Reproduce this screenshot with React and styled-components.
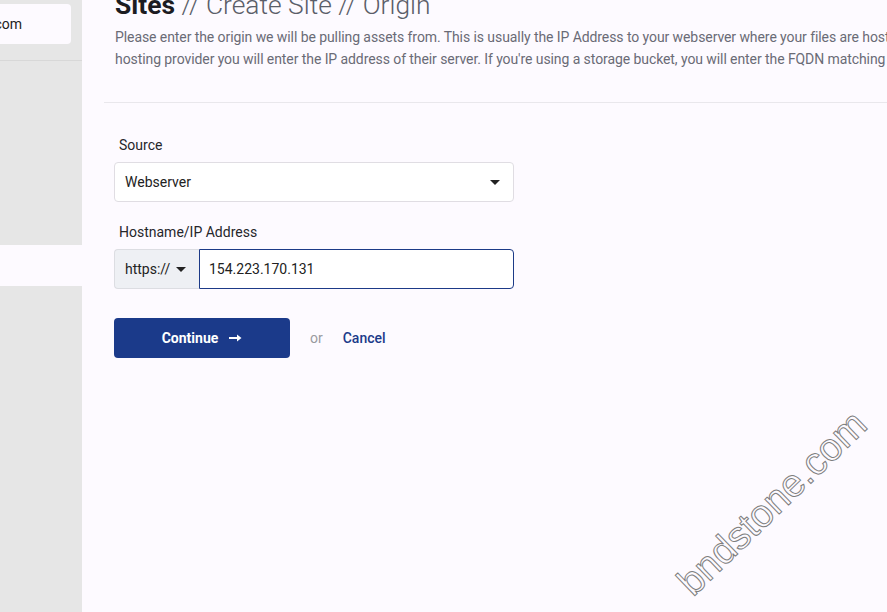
import React from 'react';
import styled, { createGlobalStyle } from 'styled-components';

const GlobalStyle = createGlobalStyle`
  html, body {
    margin: 0;
    padding: 0;
    height: 100%;
    overflow: hidden;
  }
  body {
    font-family: Roboto, 'Liberation Sans', sans-serif;
    background-color: #fdfaff;
  }
`;

const Page = styled.div`
  position: relative;
  display: flex;
  width: 887px;
  height: 612px;
  overflow: hidden;
  background-color: #fdfaff;
`;

const Sidebar = styled.div`
  flex: 0 0 82px;
  width: 82px;
  min-width: 0;
  overflow: hidden;
  display: flex;
  flex-direction: column;
  background-color: #e6e6e6;
`;

const SiteSwitch = styled.div`
  display: flex;
  align-items: center;
  justify-content: flex-end;
  margin: 4px 11px 0 0;
  height: 40px;
  padding-right: 49px;
  overflow: hidden;
  white-space: nowrap;
  background-color: #fdfaff;
  border-radius: 0 4px 4px 0;
  font-size: 14px;
  color: #222;
`;

const SiteName = styled.span`
  flex-shrink: 0;
`;

const SideRule = styled.div`
  margin-top: 16px;
  height: 1px;
  background-color: #d8d8d8;
`;

const SideItem = styled.div`
  height: 41px;
  margin-top: ${(p) => p.$offset}px;
  background-color: ${(p) => (p.$active ? '#fdfaff' : 'transparent')};
`;

const Main = styled.div`
  flex: 1;
  min-width: 0;
  padding-left: 22px;
  overflow: hidden;
`;

const Header = styled.div`
  padding: 0 0 32px 11px;
  border-bottom: 1px solid #e9e7ec;
`;

const Title = styled.h1`
  margin: -10px 0 0;
  font-size: 26.4px;
  line-height: 31px;
  font-weight: 300;
  color: #5b5e69;
  white-space: nowrap;
  b {
    font-weight: 700;
    color: #1c1c22;
  }
`;

const Lead = styled.p`
  margin: 5px 0 0;
  font-size: 14px;
  line-height: 22px;
  letter-spacing: -0.08px;
  color: #6a6b76;
  white-space: nowrap;
`;

const Form = styled.form`
  display: flex;
  flex-direction: column;
  padding: 32px 0 0 10px;
  width: 400px;
`;

const Field = styled.div`
  display: flex;
  flex-direction: column;
  margin-bottom: 20px;
`;

const Label = styled.label`
  padding-left: 5px;
  margin-bottom: 7px;
  font-size: 14px;
  line-height: 20px;
  color: #26262b;
`;

const Select = styled.div`
  display: flex;
  align-items: center;
  justify-content: space-between;
  height: 40px;
  box-sizing: border-box;
  padding: 0 13px 0 10px;
  background-color: #fff;
  border: 1px solid #e0dde3;
  border-radius: 4px;
  font-size: 14px;
  color: #222;
`;

const Caret = styled.span`
  width: 0;
  height: 0;
  border-left: 5px solid transparent;
  border-right: 5px solid transparent;
  border-top: 5px solid #222;
  margin-left: ${(p) => p.$gap || 0}px;
`;

const Group = styled.div`
  display: flex;
  height: 40px;
`;

const Addon = styled.div`
  display: flex;
  align-items: center;
  box-sizing: border-box;
  width: 85px;
  padding-left: 10px;
  background-color: #eef0f4;
  border: 1px solid #dcdde2;
  border-right: none;
  border-radius: 4px 0 0 4px;
  font-size: 14px;
  color: #222;
`;

const Input = styled.div`
  flex: 1;
  display: flex;
  align-items: center;
  box-sizing: border-box;
  padding-left: 9px;
  background-color: #fff;
  border: 1px solid #1c3a87;
  border-radius: 0 4px 4px 0;
  font-size: 14px;
  color: #222;
`;

const Actions = styled.div`
  display: flex;
  align-items: center;
  margin-top: 9px;
`;

const Primary = styled.button`
  display: flex;
  align-items: center;
  justify-content: center;
  gap: 11px;
  width: 176px;
  height: 40px;
  padding: 0;
  border: none;
  border-radius: 4px;
  background-color: #1b3a8a;
  color: #fff;
  font-family: Roboto, 'Liberation Sans', sans-serif;
  font-size: 14px;
  font-weight: 700;
`;

const Or = styled.span`
  margin-left: 20px;
  font-size: 14px;
  color: #9a9a9f;
`;

const LinkButton = styled.span`
  margin-left: 20px;
  font-size: 14px;
  font-weight: 500;
  color: #1b3a8a;
`;

const Watermark = styled.div`
  position: absolute;
  left: 772px;
  top: 503px;
  transform: translate(-50%, -50%) rotate(-44deg);
  font-family: 'Liberation Sans', Arial, sans-serif;
  font-size: 39px;
  white-space: nowrap;
  color: transparent;
  -webkit-text-stroke: 1px #7e7e7e;
  pointer-events: none;
`;

const Arrow = () => (
  <svg width="13" height="8" viewBox="0 0 13 8">
    <path d="M0 4h10" stroke="#fff" strokeWidth="2" />
    <path d="M8 0.5L12.5 4L8 7.5z" fill="#fff" />
  </svg>
);

export default function App() {
  return (
    <Page>
      <GlobalStyle />
      <Sidebar>
        <SiteSwitch>
          <SiteName>bndstone.com</SiteName>
        </SiteSwitch>
        <SideRule />
        <SideItem $offset={184} $active />
      </Sidebar>
      <Main>
        <Header>
          <Title>
            <b>Sites</b> // Create Site // Origin
          </Title>
          <Lead>
            Please enter the origin we will be pulling assets from. This is usually the IP Address to your webserver where your files are hosted. If you're using a
            <br />
            hosting provider you will enter the IP address of their server. If you're using a storage bucket, you will enter the FQDN matching the bucket name.
          </Lead>
        </Header>
        <Form>
          <Field>
            <Label>Source</Label>
            <Select>
              Webserver
              <Caret />
            </Select>
          </Field>
          <Field>
            <Label>Hostname/IP Address</Label>
            <Group>
              <Addon>
                https://
                <Caret $gap={6} />
              </Addon>
              <Input>154.223.170.131</Input>
            </Group>
          </Field>
          <Actions>
            <Primary type="button">
              Continue <Arrow />
            </Primary>
            <Or>or</Or>
            <LinkButton>Cancel</LinkButton>
          </Actions>
        </Form>
      </Main>
      <Watermark>bndstone.com</Watermark>
    </Page>
  );
}
